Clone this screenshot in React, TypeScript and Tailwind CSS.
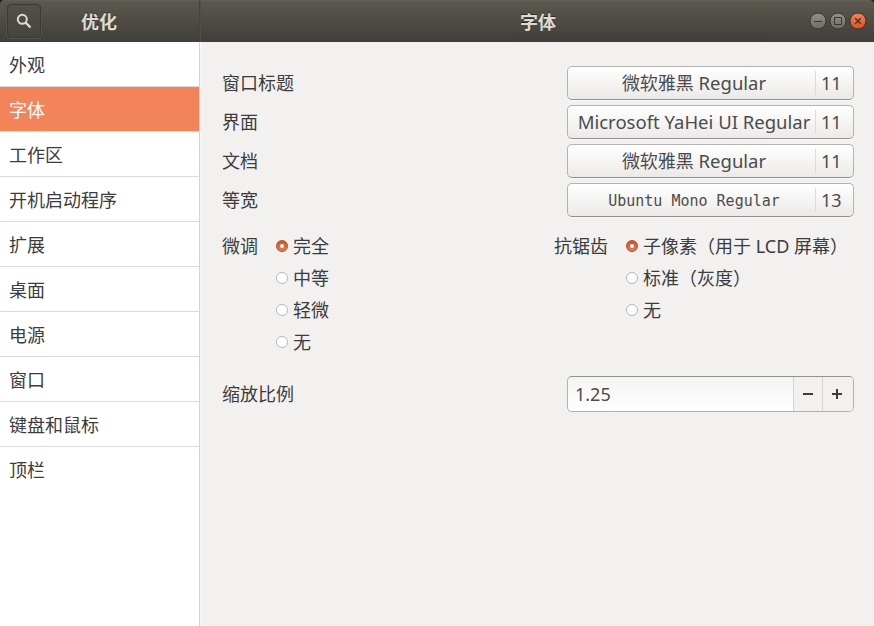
import React from "react";

const sidebarItems = ["外观", "字体", "工作区", "开机启动程序", "扩展", "桌面", "电源", "窗口", "键盘和鼠标", "顶栏"];

const fontRows = [
  { label: "窗口标题", cjk: "微软雅黑", font: "Regular", size: "11", style: "text-[18.5px]" },
  { label: "界面", cjk: "", font: "Microsoft YaHei UI Regular", size: "11", style: "text-[18.5px]" },
  { label: "文档", cjk: "微软雅黑", font: "Regular", size: "11", style: "text-[18.5px]" },
  {
    label: "等宽",
    cjk: "",
    font: "Ubuntu Mono Regular",
    size: "13",
    style: "font-['DejaVu_Sans_Mono',monospace] text-[15px]",
  },
];

const titleText = "pt-px text-[18px] leading-6 font-bold text-[#dfdbd2] [text-shadow:0_-1px_#2b2a27]";

function HeaderBar() {
  return (
    <header className="flex h-[42px] shrink-0 rounded-t-[5px] bg-linear-to-b from-[#5c5a50] to-[#3f3e39] shadow-[inset_0_1px_#625f56]">
      <div className="flex w-[200px] items-center border-r border-[#45443e] pl-[7px]">
        <button className="flex size-[34px] items-center justify-center rounded border border-[#3a3934] bg-linear-to-b from-[#535148] to-[#45443e] shadow-[0_0_0_1px_#55534b]">
          <svg width="16" height="16" viewBox="0 0 16 16" fill="none" stroke="#dfdbd2">
            <circle cx="6.3" cy="6.3" r="4.5" strokeWidth="2" />
            <path d="m9.5 9.5 5 5" strokeWidth="2.4" />
          </svg>
        </button>
        <h1 className={`ml-10 ${titleText}`}>优化</h1>
      </div>
      <div className="flex flex-1 items-center border-l border-[#504e46]">
        <h2 className={`flex-1 pl-[65px] text-center ${titleText}`}>字体</h2>
        <div className="flex gap-1 pr-2">
          <WindowButton path="M4 8.5h8" />
          <WindowButton path="M4.5 4.5h7v7h-7z" />
          <WindowButton path="m5.2 5.2 5.6 5.6M10.8 5.2 5.2 10.8" close />
        </div>
      </div>
    </header>
  );
}

function WindowButton({ path, close = false }: { path: string; close?: boolean }) {
  return (
    <svg width="16" height="16" viewBox="0 0 16 16" className="overflow-visible" fill="none">
      <defs>
        <linearGradient id={close ? "wb-close" : "wb"} x1="0" y1="0" x2="0" y2="1">
          <stop stopColor={close ? "#f58159" : "#92918a"} />
          <stop offset="1" stopColor={close ? "#e5501c" : "#6b6a63"} />
        </linearGradient>
      </defs>
      <circle cx="8" cy="8" r="8" fill={close ? "url(#wb-close)" : "url(#wb)"} stroke="#38362f" />
      <path d={path} stroke="#3a3832" strokeWidth={close ? 1.5 : 1} />
    </svg>
  );
}

function Sidebar() {
  return (
    <nav className="w-[200px] shrink-0 border-r border-[#d6d4d2] bg-white">
      {sidebarItems.map((item, i) => (
        <div
          key={item}
          className={`flex h-[45px] items-center border-b pt-px pl-[9px] ${
            i === 1 ? "bg-[#f38459] text-white" : "text-[#3c3c3c]"
          } ${i === sidebarItems.length - 1 ? "border-transparent" : "border-[#dcdad8]"}`}
        >
          {item}
        </div>
      ))}
    </nav>
  );
}

function FontButton({ cjk, font, size, style }: { cjk: string; font: string; size: string; style: string }) {
  return (
    <button className="flex h-[34px] w-[287px] items-center rounded-[5px] border border-[#b5b3b0] border-b-[#929190] bg-linear-to-b from-white to-[#ebeae8] text-[#4c4c4c] shadow-[0_1px_#f8f8f7]">
      <span className="flex-1 pl-[5px] whitespace-nowrap">
        {cjk && `${cjk} `}
        <span className={style}>{font}</span>
      </span>
      <span className="flex h-6 w-[38px] items-center border-l border-[#dcdbd9] pl-[5px]">{size}</span>
    </button>
  );
}

function Radio({ label, checked = false }: { label: string; checked?: boolean }) {
  return (
    <div className="flex h-8 items-center gap-[5px] whitespace-nowrap">
      <span
        className={`flex size-3 items-center justify-center rounded-full border ${
          checked ? "border-[#b5502b] bg-linear-to-b from-[#cb5325] to-[#e57b50]" : "border-[#b9b7b4] bg-white"
        }`}
      >
        {checked && <span className="size-1 rounded-full bg-white" />}
      </span>
      <span>{label}</span>
    </div>
  );
}

export default function App() {
  return (
    <div className="h-[626px] w-[874px] overflow-hidden bg-[#222]">
      <div className="flex h-full flex-col font-['Noto_Sans','Noto_Sans_CJK_SC',sans-serif] text-[18px] leading-6 text-[#3c3c3c]">
        <HeaderBar />
        <div className="flex min-h-0 flex-1">
          <Sidebar />
          <main className="flex flex-1 flex-col border-l-2 border-[#f6f5f4] bg-[#f2f1ef] pt-6 pr-5 pl-5">
            <div className="flex flex-col gap-[5px]">
              {fontRows.map((row) => (
                <div key={row.label} className="flex items-center justify-between">
                  <span>{row.label}</span>
                  <FontButton cjk={row.cjk} font={row.font} size={row.size} style={row.style} />
                </div>
              ))}
            </div>
            <div className="mt-[13px] flex">
              <div className="flex w-[332px] gap-[18px]">
                <span className="h-8 leading-8">微调</span>
                <div>
                  <Radio label="完全" checked />
                  <Radio label="中等" />
                  <Radio label="轻微" />
                  <Radio label="无" />
                </div>
              </div>
              <div className="flex gap-[18px]">
                <span className="h-8 leading-8">抗锯齿</span>
                <div>
                  <Radio label="子像素（用于 LCD 屏幕）" checked />
                  <Radio label="标准（灰度）" />
                  <Radio label="无" />
                </div>
              </div>
            </div>
            <div className="mt-[18px] flex items-center justify-between">
              <span>缩放比例</span>
              <div className="flex h-9 w-[287px] overflow-hidden rounded-[5px] border border-[#b3b1ae] border-t-[#92918f] bg-linear-to-b from-[#f4f4f3] to-white text-[#4c4c4c]">
                <span className="flex flex-1 items-center pl-[7px]">1.25</span>
                <span className="flex w-[29px] items-center justify-center border-l border-[#d6d4d2] bg-[#f2f1ef]">
                  <svg width="10" height="10" fill="#3c3c3c"><path d="M0 4h10v2H0z" /></svg>
                </span>
                <span className="flex w-[31px] items-center border-l border-[#d6d4d2] bg-[#f2f1ef] pl-[9px]">
                  <svg width="10" height="10" fill="#3c3c3c"><path d="M0 4h4V0h2v4h4v2H6v4H4V6H0z" /></svg>
                </span>
              </div>
            </div>
          </main>
        </div>
      </div>
    </div>
  );
}
